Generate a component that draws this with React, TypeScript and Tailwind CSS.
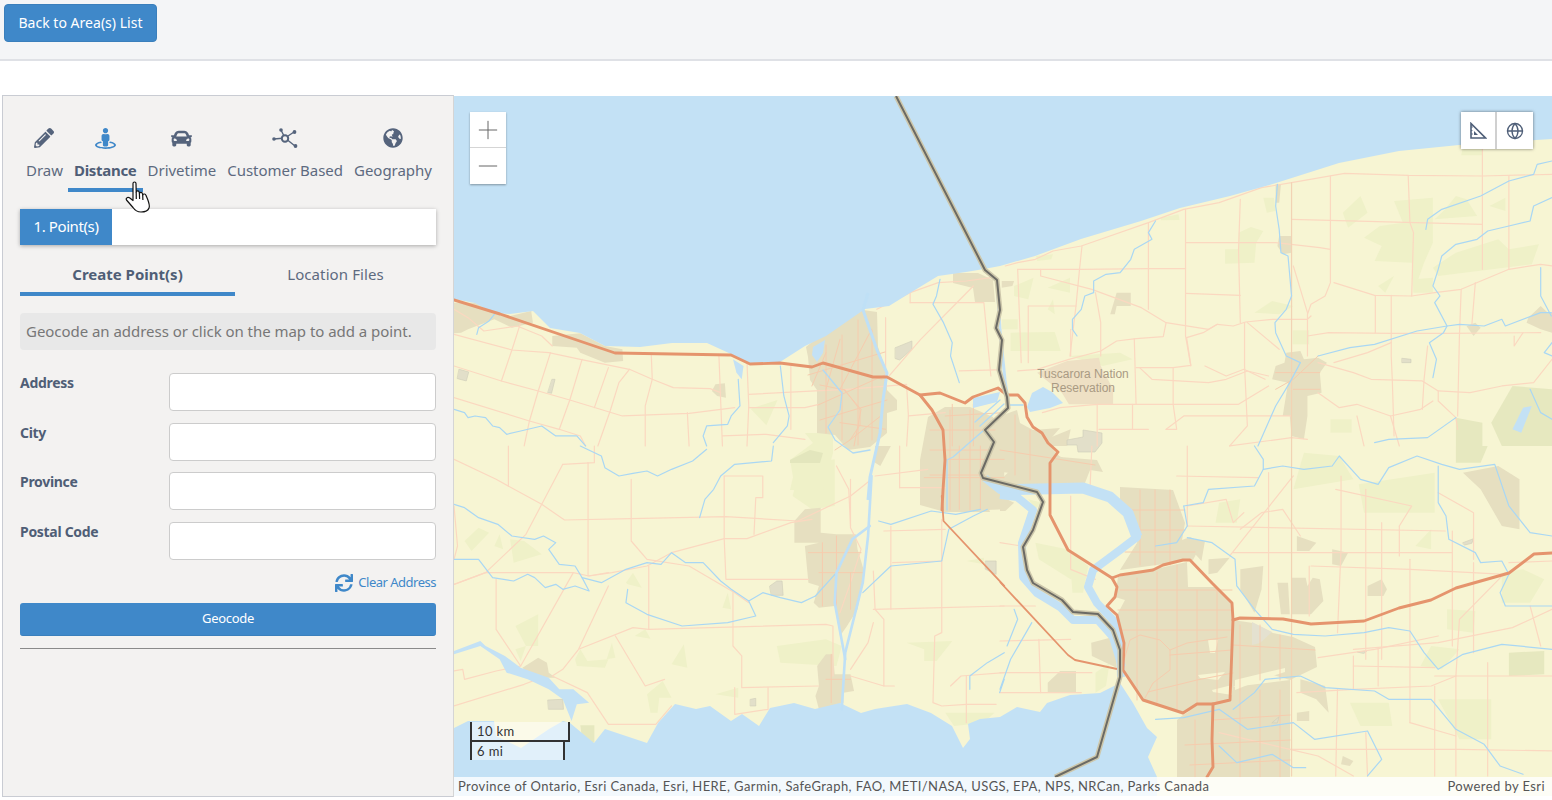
import { FaCar, FaGlobeAmericas, FaPencilAlt, FaStreetView, FaSync } from "react-icons/fa";
import { Globe, Minus, Plus } from "lucide-react";

const FONT = "font-['Noto_Sans',sans-serif]";

// map geometry is traced per quadrant, in the crop coordinates of each quadrant
const Q1 = {
  t: "translate(454 96) scale(0.3509 0.3333)",
  green: ["M845,938 L922,912 L890,988Z"],
  urban: [
    "M0,0 L70,0 L60,30 L40,50 L15,85 L5,130 L0,140Z",
    "M0,620 L60,620 L110,650 L160,660 L220,645 L225,680 L165,695 L115,670 L40,700 L20,710 L0,712Z",
    "M280,720 L360,712 L430,750 L480,760 L482,795 L430,800 L360,770 L350,755 L280,750Z",
    "M745,865 L772,862 L775,905 L750,900 L735,885Z",
  ],
  gray: ["M15,820 L42,828 L35,855 L10,848Z", "M280,850 L288,850 L278,892 L268,890Z", "M1258,755 L1305,735 L1305,760 L1270,792 L1258,788Z"],
  roads: [
    "M0,640 L40,665 L85,705 L180,690 L250,720 L280,750",
    "M0,715 L165,762 L270,770 L360,790 L500,820 L565,850 L625,875 L730,878 L760,890",
    "M0,810 L135,855 L240,885 L330,912 L480,960 L670,952 L800,935",
    "M0,905 L215,975 L300,1000 L360,1020 L375,1050",
    "M190,680 L165,762 L135,855",
    "M275,770 L240,885 L215,975 L200,1050",
    "M365,790 L330,912 L300,1000",
    "M440,815 L400,935",
    "M500,820 L470,860 L445,945 L410,1050",
    "M562,770 L565,850 L545,930 L545,1050",
    "M755,780 L765,1050",
    "M835,800 L840,930 L835,1050",
    "M765,1020 L890,1015 L1000,1030",
    "M840,895 L1030,885 L1120,880",
    "M960,810 L960,1000",
    "M840,935 L1000,935 L1040,925",
    "M665,950 L670,1050",
    "M1230,665 L1230,840",
    "M1205,640 L1300,590 L1380,560 L1460,555 L1530,545",
    "M1300,620 L1300,590",
    "M1300,620 L1510,620 L1530,840",
    "M1480,570 L1330,730 L1240,840",
    "M1440,825 L1545,822",
    "M1290,870 L1295,960 L1290,1050",
    "M1120,880 L1290,865",
    "M1295,960 L1400,950",
  ],
  urbanRoads: [
    "M1060,770 L1020,870",
    "M1100,880 L1190,700",
    "M1040,800 L1220,850",
    "M1060,880 L1100,730",
    "M1140,1050 L1160,940 L1110,880",
    "M1100,980 L1230,1000",
    "M1400,960 L1568,950",
    "M1420,925 L1420,1050",
    "M1480,925 L1480,1050",
  ],
  water: ["M795,790 L825,810 L820,850 L805,830Z"],
  rivers: [
    "M65,715 L70,695 L100,675 L115,655",
    "M0,940 L30,950 L40,965 L60,960 L90,965 L110,990 L130,995 L150,1015 L190,1005 L250,990 L290,1020 L350,1020 L375,1050",
    "M1385,550 L1375,600 L1365,625 L1395,680 L1420,740 L1415,780 L1440,860",
    "M930,810 L940,900 L955,960 L950,990 L910,1040",
    "M810,850 L815,930 L790,960 L780,985 L720,990 L710,1020 L720,1050",
  ],
  canal: [],
  thin: [],
};

const Q2 = {
  t: "translate(1000 96) scale(0.3534 0.3333)",
  green: [
    "M745,305 L775,305 L780,345 L755,350Z",
    "M675,410 L710,393 L745,405 L725,440 L720,500 L637,503 L637,460 L675,460Z",
    "M970,350 L1020,300 L1040,350 L985,395Z",
    "M1115,315 L1225,305 L1225,440 L1200,500 L1170,590 L1165,500 L1060,495 L1080,450 L1030,425 L1075,390 L1140,380Z",
    "M1260,340 L1290,300 L1320,310 L1350,360 L1230,370Z",
    "M1385,330 L1430,305 L1430,345Z",
    "M1225,515 L1290,470 L1410,430 L1440,460 L1525,445 L1505,505 L1240,540Z",
    "M1170,550 L1225,545 L1225,590 L1170,590Z",
    "M1070,570 L1115,540 L1090,590Z",
    "M720,650 L770,615 L830,630 L790,655Z",
    "M828,703 L875,703 L875,745 L828,745Z",
    "M40,570 L95,545 L80,610 L40,600Z",
    "M135,575 L198,545 L198,590Z",
    "M135,640 L150,610 L155,655Z",
    "M30,710 L155,708 L172,765 L30,765Z",
    "M195,780 L340,770 L375,790 L290,810Z",
    "M935,970 L995,970 L995,1010 L935,1010Z",
    "M102,480 L150,475 L145,490 L105,495Z",
    "M455,365 L505,355 L508,372 L455,373Z",
    "M5,670 L50,670 L50,700 L5,700Z",
    "M1310,150 L1365,150 L1365,178 L1305,178Z",
  ],
  darkGreen: ["M1390,980 L1450,870 L1562,880 L1562,1050 L1420,1050Z", "M1290,965 L1365,980 L1365,1050 L1290,1050Z"],
  urban: [
    "M810,770 L850,765 L860,790 L900,785 L925,800 L905,830 L910,890 L870,900 L870,960 L860,1030 L825,1020 L820,960 L800,960 L815,860 L770,850 L780,810 L805,800Z",
    "M790,420 L825,420 L825,470 L800,475 L785,450Z",
    "M1530,630 L1550,650 L1562,650 L1562,710 L1530,700 L1490,680 L1495,665Z",
    "M1320,690 L1345,680 L1360,695 L1340,720Z",
    "M780,265 L795,265 L790,320 L780,320Z",
    "M330,590 L370,590 L370,630 L330,630 L325,655 L312,655Z",
    "M130,1030 L200,1000 L190,1050 L130,1050Z",
    "M5,555 L40,555 L35,570 L5,575Z",
  ],
  reservation: ["M105,830 L190,795 L280,785 L285,810 L320,880 L320,925 L195,925 L175,890Z"],
  gray: ["M1138,787 L1163,790 L1163,800 L1138,800Z"],
  roads: [
    "M15,510 L50,500 L100,490 L150,465 L230,450 L420,380 L520,340 L620,320 L740,275 L825,260 L975,232 L1155,238 L1365,240 L1562,235",
    "M50,520 L115,520 L150,520 L230,520 L420,518 L525,518",
    "M115,520 L115,540 L260,580 L400,635 L470,680 L590,700 L615,685 L660,690 L695,678 L770,670 L870,670 L880,660",
    "M525,340 L525,720 L540,810",
    "M232,450 L225,520 L215,630 L198,780",
    "M420,380 L420,640",
    "M525,440 L680,440 L780,440 L905,455 L935,460",
    "M525,592 L680,598",
    "M680,310 L675,460 L680,680",
    "M825,370 L1365,385",
    "M935,240 L935,560 L920,600 L880,625 L870,655 L870,780",
    "M1155,238 L1160,380 L1170,410 L1165,600",
    "M945,560 L1060,598 L1165,600 L1230,590 L1305,580 L1440,520 L1530,505 L1562,510",
    "M1365,150 L1365,520",
    "M1440,240 L1440,520",
    "M1062,598 L1062,710",
    "M1107,598 L1107,780 L1110,850 L1115,1020",
    "M830,510 L870,650",
    "M470,680 L462,722 L385,728 L330,735 L285,765 L195,790 L105,820 L50,825",
    "M380,728 L385,925",
    "M528,725 L575,710 L615,685",
    "M528,725 L540,808 L490,815 L385,815",
    "M692,680 L692,810 L700,990 L650,1050",
    "M700,680 L790,760",
    "M870,720 L930,710 L1107,712 L1255,712 L1530,710",
    "M1305,580 L1300,720 L1295,960",
    "M1345,560 L1335,690",
    "M1455,720 L1455,750 L1480,710",
    "M1210,750 L1200,850 L1195,940",
    "M945,800 L1040,770 L1107,740",
    "M900,800 L1000,830 L1050,850 L1195,855 L1240,885 L1330,890 L1420,870 L1510,860 L1562,790",
    "M1240,885 L1240,915 L1290,965 L1295,1000",
    "M900,890 L960,935 L1010,925 L1105,960 L1190,940 L1225,915",
    "M490,815 L490,925 L500,1000 L470,1000",
    "M80,630 L215,630",
    "M80,630 L80,800",
    "M50,520 L60,800",
    "M200,700 L200,780",
    "M275,925 L675,925 L760,870",
    "M375,925 L375,1000",
    "M420,1000 L280,1000",
    "M470,1000 L520,960 L825,960",
    "M580,810 L640,840 L690,820 L750,850",
    "M395,815 L430,850 L590,860 L640,850 L700,825 L760,840",
    "M650,1050 L825,1025 L870,1030",
    "M1010,960 L1030,1050",
    "M1105,960 L1130,1050",
    "M270,590 L285,680 L285,780",
    "M120,950 L170,935 L275,925 L275,1050",
  ],
  county: ["M825,260 L825,1050"],
  urbanRoads: ["M780,880 L830,850 L900,780", "M830,880 L905,880", "M780,830 L905,830"],
  water: ["M1480,935 L1505,930 L1475,1010 L1450,1000Z"],
  rivers: [
    "M440,375 L420,410 L430,430 L380,460 L370,490 L340,530 L300,535 L265,555 L265,590 L240,600 L230,640 L205,670 L205,700 L218,720",
    "M785,265 L780,330 L790,400 L795,470 L815,480 L820,540 L825,600 L810,640 L778,680 L780,710 L810,780 L850,800 L820,860 L780,930 L730,1050",
    "M1205,400 L1210,370 L1250,340 L1360,300 L1440,255 L1510,235 L1520,205 L1562,195",
    "M1562,305 L1510,330 L1500,375 L1440,390 L1380,405 L1350,430 L1290,445 L1250,480 L1240,520 L1225,570 L1245,600 L1230,620 L1265,690 L1255,710 L1215,740 L1235,790 L1225,845",
    "M900,780 L990,755 L1060,745 L1180,705 L1265,690 L1300,685 L1370,690 L1420,670 L1430,690 L1530,650 L1560,650",
    "M1530,515 L1530,600 L1560,660",
    "M1500,880 L1530,950 L1562,970",
    "M1060,1040 L1100,1030 L1210,1025 L1290,965",
    "M1562,740 L1540,770 L1562,780",
  ],
  canal: [],
  thin: [],
};

const Q3 = {
  t: "translate(454 446) scale(0.3509 0.3333)",
  green: [
    "M1020,50 L1085,40 L1085,180 L1020,190 L965,150 L985,70Z",
    "M30,285 L70,245 L100,260 L50,315Z",
    "M115,300 L130,265 L140,310Z",
    "M160,280 L200,285 L250,325 L170,350Z",
    "M175,610 L205,600 L190,645Z",
    "M175,540 L240,505 L240,600 L205,600Z",
    "M345,640 L360,610 L380,645 L440,640 L430,665 L350,660Z",
    "M435,640 L450,590 L460,635Z",
    "M620,655 L655,595 L665,665Z",
    "M490,410 L510,380 L535,425 L495,415Z",
    "M765,485 L780,440 L790,490Z",
    "M515,570 L545,550 L560,578Z",
    "M920,600 L1060,580 L1105,600 L1090,660 L930,650Z",
    "M1290,590 L1420,585 L1375,645 L1340,645 L1340,610Z",
    "M745,745 L810,725 L810,755Z",
    "M550,745 L595,705 L620,755 L585,755 L580,800 L560,800Z",
    "M1400,800 L1540,800 L1510,830 L1425,840Z",
    "M1460,345 L1510,335 L1510,355Z",
  ],
  darkGreen: ["M360,838 L400,838 L400,890 L365,880Z"],
  urban: [
    "M1330,70 L1400,0 L1568,0 L1568,190 L1450,195 L1450,145 L1400,125 L1330,120Z",
    "M970,225 L1000,190 L1045,185 L1045,260 L1090,265 L1145,265 L1150,310 L1170,380 L1150,490 L1120,540 L1100,570 L1085,480 L1040,485 L1025,470 L1040,420 L1010,410 L1000,300 L1040,290 L970,290Z",
    "M1060,625 L1080,625 L1085,685 L1130,685 L1140,735 L1110,740 L1110,770 L1040,790 L1030,750 L1040,720 L1035,660Z",
    "M195,665 L240,635 L265,650 L270,680 L290,695 L225,695Z",
    "M1200,0 L1245,0 L1215,60 L1200,50Z",
  ],
  gray: [
    "M268,762 L310,760 L312,790 L270,790Z",
    "M900,420 L920,405 L935,405 L938,448 L905,448Z",
    "M845,760 L860,757 L860,780 L845,780Z",
    "M1515,345 L1545,345 L1545,385 L1515,370Z",
  ],
  roads: [
    "M0,40 L120,100 L250,175 L315,222 L505,218 L775,212 L980,225 L1130,150 L1190,100",
    "M155,0 L155,120",
    "M310,55 L250,175 L205,265 L90,380 L0,415",
    "M310,55 L400,50 L400,0",
    "M382,50 L382,390 L440,380",
    "M505,100 L505,285 L550,340 L670,360 L800,440 L840,470",
    "M0,415 L90,380 L340,380 L385,390 L450,380 L550,360 L620,320 L770,278 L835,278 L960,230 L1020,220",
    "M770,90 L770,278 L775,400 L975,400 L1010,400",
    "M770,90 L880,90 L880,155 L860,155 L855,265",
    "M120,400 L120,550 L190,660 L120,675 L30,700 L25,670 L0,675",
    "M340,380 L190,660",
    "M440,420 L355,610 L310,670 L280,690 L380,740 L440,835 L575,835 L620,780",
    "M555,360 L555,550 L1060,535 L1080,540 L1080,690",
    "M555,550 L510,545 L355,610",
    "M460,570 L545,720 L600,700",
    "M795,440 L795,600 L820,630 L820,725 L1040,720",
    "M800,725 L800,805 L895,790 L895,725",
    "M0,780 L200,715 L250,695",
    "M1130,100 L1130,245 L1160,310 L1130,410 L1100,500",
    "M1090,60 L1125,130 L1130,240",
    "M1195,375 L1200,490 L1225,520 L1225,720 L1255,720",
    "M1130,690 L1225,720",
    "M1195,490 L1390,485 L1568,480",
    "M1245,240 L1245,490",
    "M1250,350 L1390,345",
    "M1270,0 L1270,125",
    "M1200,90 L1350,70",
    "M1270,125 L1400,125",
    "M1390,220 L1390,560 L1370,570 L1365,770 L1390,780 L1460,775 L1545,775",
    "M1225,255 L1400,250",
    "M1415,720 L1445,690 L1568,680",
    "M1460,690 L1460,830",
    "M0,180 L10,300 L0,340",
    "M1195,530 L1180,590 L1130,670",
  ],
  urbanRoads: [
    "M1010,320 L1160,320",
    "M1040,380 L1170,380",
    "M1050,290 L1050,480",
    "M1090,270 L1090,480",
    "M1130,380 L1130,490",
    "M1060,700 L1130,700",
    "M1075,625 L1075,770",
    "M1400,40 L1568,40",
    "M1440,0 L1440,190",
    "M1500,0 L1500,190",
    "M1340,95 L1568,95",
  ],
  water: ["M0,615 L75,585 L90,600 L145,630 L190,665 L270,695 L300,730 L340,730 L385,770 L350,775 L335,825 L310,760 L270,730 L210,700 L150,680 L130,640 L75,600 L0,625Z"],
  rivers: [
    "M360,0 L420,30 L430,65 L470,90 L510,82 L550,75 L580,90 L620,70 L680,45 L720,10",
    "M910,0 L905,45 L800,55 L760,90 L740,130 L715,160 L700,215",
    "M0,175 L30,185 L70,215 L125,235 L165,270 L230,280 L255,270 L290,290 L270,310 L300,355 L345,360 L365,395 L420,410 L490,370 L550,350 L590,355 L620,320 L660,350 L710,350 L760,405 L790,430 L840,465 L880,440 L930,455 L990,470 L1030,450",
    "M0,340 L70,340 L110,395 L170,405 L210,385 L230,395 L260,425 L290,415 L310,430 L345,420 L385,435 L365,395",
    "M495,430 L490,470 L550,505 L650,540 L780,530 L860,510 L840,465",
    "M1165,440 L1245,360 L1390,345 L1410,250 L1480,210 L1520,190",
    "M1210,225 L1245,235 L1360,195 L1430,205 L1500,190",
    "M1568,620 L1520,650 L1470,690 L1470,730",
    "M1568,700 L1555,740",
    "M1030,450 L1090,380",
  ],
  canal: ["M1190,90 L1180,270 L1165,410 L1115,620 L1105,790", "M1185,240 L1135,280 L1090,380 L1085,470 L1115,640"],
  thin: ["M1390,150 L1395,225 L1568,420"],
};

const Q4 = {
  t: "translate(1000 446) scale(0.3534 0.3333)",
  green: [
    "M1015,115 L1230,80 L1230,200 L1030,200Z",
    "M990,770 L1100,770 L1110,840 L1020,840Z",
    "M1240,760 L1390,760 L1390,880 L1300,880Z",
    "M1220,600 L1300,610 L1250,670 L1190,660Z",
    "M1265,490 L1345,495 L1340,560 L1265,550Z",
    "M1175,300 L1220,250 L1220,310Z",
    "M860,20 L960,30 L1000,100 L830,130Z",
    "M620,170 L680,160 L670,230 L610,230Z",
    "M200,370 L250,360 L235,440 L205,440Z",
    "M100,290 L190,310 L250,360 L200,400 L110,340Z",
    "M1420,380 L1480,370 L1540,400 L1500,470 L1420,470Z",
    "M80,160 L120,170 L100,190Z",
    "M270,680 L310,650 L300,720 L270,740Z",
  ],
  darkGreen: ["M1440,620 L1540,615 L1540,685 L1440,690Z", "M1290,0 L1380,0 L1360,50 L1290,50Z"],
  urban: [
    "M680,370 L745,360 L740,430 L720,500 L680,430Z",
    "M785,410 L815,410 L820,505 L795,505Z",
    "M825,395 L865,395 L870,420 L885,395 L905,400 L915,465 L880,505 L825,505Z",
    "M840,270 L895,290 L875,315 L840,315Z",
    "M940,310 L985,320 L965,360 L940,355Z",
    "M1040,420 L1080,400 L1095,430 L1085,450 L1040,450Z",
    "M590,340 L650,335 L615,380 L590,385Z",
    "M545,280 L580,285 L570,345 L540,310Z",
    "M258,590 L330,570 L330,665 L260,630Z",
    "M135,710 L170,675 L215,675 L215,740 L135,740Z",
    "M0,150 L40,170 L15,195 L0,195Z",
    "M1310,80 L1410,60 L1470,100 L1470,250 L1420,240 L1360,130Z",
    "M970,930 L1000,945 L990,960 L965,955Z",
    "M840,800 L875,795 L875,825 L840,825Z",
    "M850,700 L920,720 L930,800 L895,760 L850,740Z",
  ],
  gray: ["M1310,290 L1340,278 L1335,292 L1315,297Z", "M770,830 L790,812 L785,830Z", "M1012,618 L1038,615 L1030,622Z"],
  roads: [
    "M530,0 L530,240",
    "M530,240 L1260,255",
    "M500,90 L730,95",
    "M660,320 L1280,320",
    "M1000,660 L1230,665",
    "M1000,610 L1240,590 L1450,545 L1562,490",
    "M900,635 L1060,610 L1240,570",
    "M1230,690 L1562,690",
    "M840,740 L1000,730 L1220,720 L1290,690",
    "M0,480 L100,480",
    "M0,585 L200,580",
    "M0,680 L260,680",
    "M0,740 L230,740",
    "M620,860 L700,880 L820,910 L900,930 L1000,990",
    "M820,910 L1040,910 L1300,910 L1562,915",
    "M760,80 L760,340 L760,520",
    "M875,360 L875,510",
    "M965,90 L965,310 L955,560",
    "M1035,130 L1035,640",
    "M1080,230 L1080,640",
    "M1130,240 L1130,330",
    "M1160,340 L1160,830",
    "M1000,630 L1000,730",
    "M1070,610 L1070,720",
    "M1230,720 L1230,990",
    "M1290,690 L1290,990",
    "M1340,350 L1340,620",
    "M1380,650 L1380,990",
    "M1280,255 L1280,600",
    "M955,730 L950,990",
    "M1035,860 L1040,990",
    "M650,330 L830,90",
    "M680,250 L740,200 L800,190 L850,270",
    "M950,130 L1165,180 L1130,240",
    "M1500,480 L1530,600",
    "M1240,140 L1340,200 L1340,340",
    "M1430,380 L1300,520 L1290,690",
    "M880,360 L1160,370 L1430,385",
    "M260,0 L255,120",
    "M200,150 L200,370 L270,400",
    "M110,580 L115,740",
    "M0,290 L60,300",
    "M1562,345 L1440,350",
    "M1160,830 L1290,870",
    "M530,180 L640,160 L660,230 L690,200",
  ],
  county: ["M825,0 L825,990"],
  urbanRoads: [],
  water: [],
  rivers: [
    "M520,180 L575,170 L590,130 L720,120 L745,70 L800,60 L860,70 L940,60 L960,30 L1020,100 L1070,115 L1100,65 L1180,30 L1250,55 L1300,70 L1400,55 L1440,180 L1500,260 L1562,270",
    "M720,0 L745,40 L745,70",
    "M1240,60 L1240,170 L1262,210 L1270,280 L1345,320 L1360,350 L1420,345 L1440,385 L1415,440 L1430,480 L1562,480",
    "M530,275 L600,290 L665,340 L670,420 L720,490 L770,550 L830,565 L920,570 L1030,560 L1100,545 L1160,555 L1200,620 L1240,670 L1310,625 L1420,595 L1562,610",
    "M660,790 L720,740 L750,700 L850,690 L920,725 L1060,735 L1100,760 L1220,760 L1290,850 L1370,895 L1415,960 L1480,985",
    "M620,790 L700,850 L830,830 L890,880 L1040,855 L1080,940 L1040,990",
    "M620,900 L670,950 L770,925 L830,965 L865,965",
    "M40,490 L50,520 L20,600",
    "M0,730 L30,640 L90,530",
    "M440,820 L520,815 L620,790",
    "M520,180 L530,240 L500,290 L440,300",
  ],
  canal: [],
  thin: [],
};

const QUADS = [Q1, Q2, Q3, Q4] as Array<Record<string, any>>;

// the parts below were traced from closer crops, in page coordinates
const ONTARIO =
  "M454,96 L454,299 L475,303 L493,313 L510,314 L533,311 L550,328 L580,333 L605,346 L640,347 L672,343 L707,343 L731,354 L749,363 L780,362 L805,346 L826,336 L865,309 L889,306 L910,293 L938,276 L966,272 L984,269 L1000,266 L1035,256 L1081,239 L1141,221 L1180,208 L1230,196 L1276,183 L1339,163 L1399,151 L1459,145 L1552,139 L1552,96Z";
const ERIE =
  "M454,728 L468,721 L494,721 L496,736 L521,748 L549,729 L563,721 L570,723 L594,743 L605,729 L647,743 L658,723 L675,704 L696,709 L710,706 L731,721 L742,714 L759,726 L770,708 L794,703 L815,709 L840,703 L861,713 L875,709 L907,704 L931,713 L952,726 L963,748 L970,739 L968,724 L980,719 L1000,717 L1017,707 L1040,712 L1047,703 L1070,695 L1100,693 L1120,683 L1133,703 L1147,728 L1157,737 L1148,757 L1157,777 L1157,800 L454,800Z";
const BORDER =
  "M896,96 L985,270 L997,280 L1000,310 L996,328 L1002,340 L999,370 L1007,397 L1008,408 L985,430 L994,442 L981,473 L983,478 L1037,492 L1043,502 L1033,530 L1023,547 L1027,570 L1033,583 L1062,600 L1073,612 L1098,614 L1113,630 L1120,650 L1120,677 L1097,757 L1055,777";
const MAJOR = [
  "M454,300 L500,314 L615,353 L731,355 L750,364 L780,363 L812,367 L823,363 L873,377 L887,377 L920,395 L940,393 L965,403 L973,397 L998,388 L1007,395 L1018,395 L1025,403 L1027,417 L1033,427 L1042,433 L1048,443 L1058,452 L1050,463 L1050,515 L1068,550 L1112,578",
  "M920,395 L932,410 L943,430 L945,460 L943,490 L942,510",
  "M1112,578 L1117,587 L1115,597 L1107,606 L1117,615 L1124,643 L1123,670 L1143,700 L1183,713 L1197,704 L1213,704 L1230,700 L1233,620 L1232,603 L1212,583 L1190,560 L1183,560 L1163,565 L1153,570 L1120,575 L1112,578",
  "M1213,704 L1212,740 L1213,767 L1207,777",
  "M1233,620 L1240,618 L1283,619 L1311,624 L1364,621 L1399,608 L1431,600 L1456,588 L1509,573 L1534,554 L1552,553",
];
const URBAN = [
  "M1118,577 L1160,568 L1187,562 L1188,587 L1215,587 L1233,603 L1233,620 L1253,623 L1273,633 L1293,637 L1315,647 L1317,667 L1290,680 L1267,673 L1233,687 L1230,700 L1183,713 L1143,700 L1124,670 L1122,643 L1117,615 L1125,600 L1115,597Z",
  "M1233,687 L1290,680 L1290,777 L1177,777 L1177,720 L1183,715 L1200,705 L1230,700Z",
  "M1120,487 L1173,490 L1185,523 L1182,540 L1190,537 L1202,543 L1193,560 L1120,570 L1137,543 L1138,533 L1120,500Z",
  "M806,347 L823,333 L863,310 L877,312 L878,347 L887,373 L887,390 L897,400 L897,410 L887,413 L887,433 L870,447 L848,450 L835,435 L817,433 L817,390 L810,380 L808,357Z",
  "M928,417 L945,407 L970,407 L993,417 L1000,437 L983,467 L982,490 L990,512 L945,512 L920,505 L920,460Z",
  "M997,417 L1017,410 L1020,423 L1033,430 L1060,428 L1047,443 L1060,457 L1097,460 L1103,472 L1090,470 L1077,480 L1047,482 L1010,473 L985,470Z",
  "M953,273 L978,273 L993,280 L995,302 L975,302 L973,288 L953,283Z",
  "M1000,480 L1037,446 L1090,470 L1085,483 L1000,490Z",
];
const HOLES = [
  "M1198,675 L1225,672 L1218,680 L1200,678Z",
  "M1212,690 L1232,685 L1232,695 L1213,692Z",
  "M1235,680 L1285,668 L1285,672 L1260,680 L1235,690Z",
  "M1208,640 L1218,640 L1215,653 L1210,653Z",
  "M1190,560 L1188,587 L1215,587Z",
];
const URBAN_ROADS = [
  "M1124,660 L1130,640 L1140,635 L1160,640 L1170,650 L1170,670 L1153,683 L1145,698",
  "M1170,650 L1187,643 L1207,640 L1227,637",
  "M1148,692 L1197,680 L1233,673",
  "M1137,578 L1137,700",
  "M1157,572 L1157,705",
  "M1177,565 L1177,710",
  "M1197,590 L1197,704",
  "M1217,590 L1217,702",
  "M1120,590 L1232,590",
  "M1118,610 L1232,610",
  "M1120,630 L1232,630",
  "M1170,655 L1232,650",
  "M1240,625 L1240,690",
  "M1260,625 L1260,680",
  "M1280,635 L1280,680",
  "M1233,645 L1315,650",
  "M1140,490 L1140,565",
  "M1155,490 L1155,565",
  "M1170,490 L1170,565",
  "M1125,510 L1185,510",
  "M1132,530 L1185,530",
  "M1125,552 L1195,552",
  "M1240,690 L1240,777",
  "M1260,690 L1260,777",
  "M1280,690 L1280,777",
  "M1213,720 L1290,715",
  "M1185,745 L1290,740",
  "M1190,765 L1290,760",
  "M1195,720 L1195,777",
  "M826,345 L826,433",
  "M842,335 L842,440",
  "M858,320 L858,445",
  "M872,330 L872,440",
  "M808,375 L885,352",
  "M818,405 L885,375",
  "M820,420 L887,400",
  "M845,390 L860,410 L860,425 L850,440 L835,450",
  "M845,390 L820,385",
  "M850,440 L882,415",
  "M930,430 L995,430",
  "M930,450 L990,450",
  "M930,475 L985,475",
  "M950,410 L950,510",
  "M970,410 L970,510",
  "M1000,450 L1095,465",
  "M1030,430 L1030,480",
  "M1015,415 L1015,475",
];
const RIVERS = [
  "M823,370 L842,393 L840,410 L828,427 L835,440 L853,453 L870,450",
  "M1007,410 L953,457 L947,460 L947,510",
  "M1000,400 L975,422",
  "M1004,404 L980,426",
  "M1010,405 L1023,405",
];
const LAKES = [
  "M825,340 L813,347 L812,355 L817,362 L823,353Z",
  "M1027,407 L1032,393 L1043,387 L1052,392 L1063,403 L1050,408 L1030,412Z",
  "M973,398 L1000,392 L997,402 L973,408Z",
];
const NIAGARA_E = "M985,478 L1000,490 L1083,488 L1110,497 L1128,513 L1137,537 L1120,550 L1093,570 L1088,587 L1097,603 L1113,620 L1120,647 L1121,677";
const NIAGARA_W = "M1000,495 L1017,497 L1033,510 L1022,543 L1023,577 L1037,593 L1060,607 L1073,620 L1098,620 L1113,637 L1122,667";
const WELLAND = "M868,293 L863,310 L877,350 L887,373 L883,400 L880,433 L870,477 L868,500";

function Layer({ name, ...rest }: { name: string } & React.SVGProps<SVGPathElement>) {
  return (
    <>
      {QUADS.map((q, i) => (
        <g key={i} transform={q.t}>
          {(q[name] ?? []).map((d: string, j: number) => (
            <path key={j} d={d} vectorEffect="non-scaling-stroke" strokeLinejoin="round" strokeLinecap="round" {...rest} />
          ))}
        </g>
      ))}
    </>
  );
}

function Paths({ list, ...rest }: { list: string[] } & React.SVGProps<SVGPathElement>) {
  return (
    <>
      {list.map((d, i) => (
        <path key={i} d={d} strokeLinejoin="round" strokeLinecap="round" {...rest} />
      ))}
    </>
  );
}

function MapDrawing() {
  return (
    <svg viewBox="454 96 1098 700" className="block w-[1098px] h-[700px]">
      <rect x="454" y="96" width="1098" height="704" fill="#f7f5d3" />
      <Layer name="green" fill="#eff1c8" />
      <path d="M805,433 L833,433 L833,453 L823,490 L790,490 L793,477 L790,460 L813,443Z" fill="#eff1c8" />
      <path d="M790,460 L810,450 L823,453 L820,463 L790,463Z" fill="#e3e6bd" />
      <Layer name="darkGreen" fill="#e6e8bf" />
      <Layer name="urban" fill="#e6dfc0" />
      <Paths list={URBAN} fill="#e6dfc0" />
      <Paths list={HOLES} fill="#f7f5d3" />
      <Layer name="reservation" fill="#eee0c4" />
      <Layer name="gray" fill="#e2dfc9" stroke="#cfcdb8" strokeWidth={0.6} />
      <path d="M1067,440 L1083,437 L1083,430 L1102,433 L1102,443 L1095,452 L1078,452 L1077,445 L1067,445Z" fill="#e2dfc9" stroke="#cfcdb8" strokeWidth={0.6} />
      <path d="M1252,622 L1272,632 L1260,643 L1252,645Z" fill="#e4e1d0" />
      <Layer name="roads" fill="none" stroke="#fbd8c0" strokeWidth={1.2} />
      <Layer name="urbanRoads" fill="none" stroke="#f6ccae" strokeWidth={1} />
      <Paths list={URBAN_ROADS} fill="none" stroke="#f6ccae" strokeWidth={1} />
      <Layer name="county" fill="none" stroke="#f2d3b4" strokeWidth={1.2} />
      <path d={ONTARIO} fill="#c3e1f5" />
      <path d={ERIE} fill="#c3e1f5" />
      <Layer name="water" fill="#c3e1f5" />
      <Paths list={LAKES} fill="#c3e1f5" />
      <Layer name="rivers" fill="none" stroke="#a9d7f4" strokeWidth={1.2} />
      <Paths list={RIVERS} fill="none" stroke="#b0daf4" strokeWidth={1.3} />
      <Layer name="canal" fill="none" stroke="#bfe0f6" strokeWidth={2.6} />
      <path d={WELLAND} fill="none" stroke="#bfe0f6" strokeWidth={3} strokeLinejoin="round" />
      <path d={NIAGARA_E} fill="none" stroke="#c3e1f5" strokeWidth={8} strokeLinejoin="round" />
      <path d="M1000,490 L1083,488 L1110,497 L1128,513 L1137,537" fill="none" stroke="#c3e1f5" strokeWidth={11} strokeLinejoin="round" />
      <path d={NIAGARA_W} fill="none" stroke="#c3e1f5" strokeWidth={8} strokeLinejoin="round" />
      <path d="M997,280 L1000,330 L1005,380 L1008,400" fill="none" stroke="#c3e1f5" strokeWidth={3} />
      <Layer name="thin" fill="none" stroke="#e5946d" strokeWidth={1.8} />
      <path d="M1000,582 L1068,655 L1075,660 L1117,669" fill="none" stroke="#e5946d" strokeWidth={1.8} strokeLinejoin="round" />
      <Paths list={MAJOR} fill="none" stroke="#e5946d" strokeWidth={2.9} />
      <path d={BORDER} fill="none" stroke="#cdc7ab" strokeWidth={5} strokeLinejoin="round" />
      <path d={BORDER} fill="none" stroke="#6b6a64" strokeWidth={2} strokeLinejoin="round" />
      <text x="1083" y="378" textAnchor="middle" fontSize="12" fill="#a99a83" fontFamily="'Liberation Sans',sans-serif">
        Tuscarora Nation
      </text>
      <text x="1083" y="392" textAnchor="middle" fontSize="12" fill="#a99a83" fontFamily="'Liberation Sans',sans-serif">
        Reservation
      </text>
    </svg>
  );
}

function NetworkIcon() {
  return (
    <svg viewBox="0 0 27 20" className="w-[27px] h-[20px]" fill="#55647c" stroke="#55647c">
      <path d="M9,2 L13,10 M22,4 L13,10 M23,18 L13,10 M2,11 L13,10" strokeWidth="1.4" />
      <circle cx="13" cy="10.5" r="3.2" fill="#f3f2f1" strokeWidth="2" />
      <circle cx="9" cy="2" r="1.8" stroke="none" />
      <circle cx="22.5" cy="4" r="1.9" stroke="none" />
      <circle cx="23.5" cy="18" r="1.9" stroke="none" />
      <circle cx="2" cy="11" r="1.8" stroke="none" />
    </svg>
  );
}

function HandCursor() {
  return (
    <svg viewBox="0 0 26 32" className="absolute left-[125px] top-[181px] w-[26px] h-[32px]" fill="#fff" stroke="#111" strokeWidth="1.2" strokeLinejoin="round">
      <path d="M8,2.5 C8,0.5 11,0.5 11,2.5 L11.2,11 C11.5,9.5 14,9.5 14.2,11.2 L14.4,12.5 C14.8,11 17.2,11 17.5,12.8 L17.7,14 C18.2,12.6 20.6,12.6 21,14.5 C22,17 25.5,24 24,27 C23,30 20,31 16,31 C12,31 10,29.5 8,26.5 L1.5,19 C0.5,17.5 2.5,15.5 4.5,16.8 L8,19.5Z" />
      <path d="M14.4,12.5 L14.6,18 M17.7,14 L17.9,19 M11.2,11 L11.3,18" fill="none" />
    </svg>
  );
}

function SetSquare() {
  return (
    <svg viewBox="0 0 18 18" className="w-[18px] h-[18px]" fill="none" stroke="#4f5f78" strokeWidth="1.6">
      <path d="M2,1.5 L2,16 L16.5,16Z" />
      <path d="M5,9 L5,13 L9,13Z" fill="#4f5f78" stroke="none" />
      <path d="M2,5 L4,5 M2,8.5 L3.5,8.5 M2,12 L4,12" strokeWidth="0.8" />
    </svg>
  );
}

const tabs = [
  { label: "Draw", icon: <FaPencilAlt size={20} /> },
  { label: "Distance", icon: <FaStreetView size={21} className="text-[#3f88c9]" />, active: true },
  { label: "Drivetime", icon: <FaCar size={21} /> },
  { label: "Customer Based", icon: <NetworkIcon /> },
  { label: "Geography", icon: <FaGlobeAmericas size={20} /> },
];

const fields = ["Address", "City", "Province", "Postal Code"];

export default function App() {
  return (
    <div className={`relative w-[1552px] h-[800px] overflow-hidden bg-white ${FONT}`}>
      <header className="h-[61px] bg-[#f4f5f7] border-b-2 border-[#dfe1e6] pt-1 pl-1">
        <button className="h-[38px] w-[153px] rounded bg-[#3f88c9] border border-[#3a7fbc] pb-[2px] text-white text-[14px] tracking-[0.02px]">
          Back to Area(s) List
        </button>
      </header>

      <main className="flex mt-[34px] h-[702px] pl-[2px]">
        <aside className="w-[452px] shrink-0 bg-[#f3f2f1] border border-[#c9ccd3] border-r-[#d5d5d5] px-[17px] text-[#5d6a7f]">
          <nav className="flex justify-start gap-[11px] pt-[30px] pl-[6px] h-[96px]">
            {tabs.map((t) => (
              <div key={t.label} className="relative flex flex-col items-center">
                <div className="h-[24px] flex items-center text-[#55647c]">{t.icon}</div>
                <span className={`mt-[9px] text-[15px] leading-[22px] whitespace-nowrap ${t.active ? "font-bold text-[#4f5e76] tracking-[-0.3px]" : "tracking-[-0.02px]"}`}>
                  {t.label}
                </span>
                {t.active && <div className="absolute -left-[6px] -right-[6px] top-[62px] h-[4px] bg-[#3f88c9]" />}
              </div>
            ))}
          </nav>

          <div className="mt-[17px] h-[36px] bg-white shadow-[0_1px_4px_rgba(0,0,0,0.3)] flex">
            <div className="w-[92px] bg-[#3f88c9] text-white text-[15px] tracking-[-0.4px] pb-[2px] flex items-center justify-center">1. Point(s)</div>
          </div>

          <div className="flex mt-[14px] h-[37px]">
            <div className="w-[215px] border-b-4 border-[#3f88c9] text-center text-[15px] font-bold text-[#4f5e76] leading-[30px] tracking-[0px]">
              Create Point(s)
            </div>
            <div className="flex-1 text-center text-[15px] leading-[30px] tracking-[0.1px]">Location Files</div>
          </div>

          <div className="mt-[17px] h-[37px] rounded bg-[#e8e8e8] text-[#777] text-[15px] leading-[37px] pl-[6px] tracking-[-0.04px] whitespace-nowrap">
            Geocode an address or click on the map to add a point.
          </div>

          <div className="mt-[23px] flex flex-col gap-[11.5px]">
            {fields.map((f) => (
              <div key={f} className="flex justify-between h-[38px]">
                <label className="text-[14px] font-bold text-[#4f5e76] leading-[20px] tracking-[-0.3px]">{f}</label>
                <input className="w-[267px] h-[38px] bg-white border border-[#ccc] rounded" />
              </div>
            ))}
          </div>

          <div className="mt-[13px] flex justify-end items-center gap-[5px] h-[20px] text-[#3f88c9]">
            <FaSync size={18} />
            <span className="text-[13px] tracking-[-0.5px]">Clear Address</span>
          </div>

          <button className="mt-[10px] w-full h-[33px] rounded-[3px] bg-[#3f88c9] border-b border-[#3a7fbc] text-white text-[13px] tracking-[-0.3px]">
            Geocode
          </button>
          <div className="mt-[12px] h-px bg-[#8a8a8a]" />
        </aside>

        <section className="relative mt-px w-[1098px] h-[700px] overflow-hidden">
          <MapDrawing />

          <div className="absolute left-[16px] top-[16px] w-[36px] bg-white shadow-[0_1px_2px_rgba(0,0,0,0.35)] text-[#666]">
            <div className="h-[36px] flex items-center justify-center border-b border-[#d5d5d5]">
              <Plus size={30} strokeWidth={0.8} />
            </div>
            <div className="h-[36px] flex items-center justify-center">
              <Minus size={30} strokeWidth={0.8} />
            </div>
          </div>

          <div className="absolute left-[1007px] top-[16px] flex bg-white shadow-[0_0_3px_rgba(0,0,0,0.5)]">
            <div className="w-[36px] h-[37px] flex items-center justify-center border-r-2 border-[#d0d0d0]">
              <SetSquare />
            </div>
            <div className="w-[36px] h-[37px] flex items-center justify-center text-[#4f5f78]">
              <Globe size={18} strokeWidth={1.8} />
            </div>
          </div>

          <div className="absolute left-[16px] bottom-[36px] text-[13px] leading-[18px] tracking-[0.4px] text-[#323232] font-['Lato',sans-serif]">
            <div className="w-[100px] h-[20px] bg-white/50 border-l-2 border-r-2 border-b-2 border-[#323232] pl-[5px]">10 km</div>
            <div className="w-[95px] h-[18px] bg-white/50 border-l-2 border-r-2 border-[#323232] pl-[5px]">6 mi</div>
          </div>

          <div className="absolute left-0 right-0 bottom-0 h-[19px] bg-white/80 flex justify-between items-center pl-[4px] pr-[7px] text-[13px] text-[#555] font-['Lato',sans-serif] tracking-[0.41px]">
            <span>Province of Ontario, Esri Canada, Esri, HERE, Garmin, SafeGraph, FAO, METI/NASA, USGS, EPA, NPS, NRCan, Parks Canada</span>
            <span>Powered by Esri</span>
          </div>
        </section>
      </main>

      <HandCursor />
    </div>
  );
}
